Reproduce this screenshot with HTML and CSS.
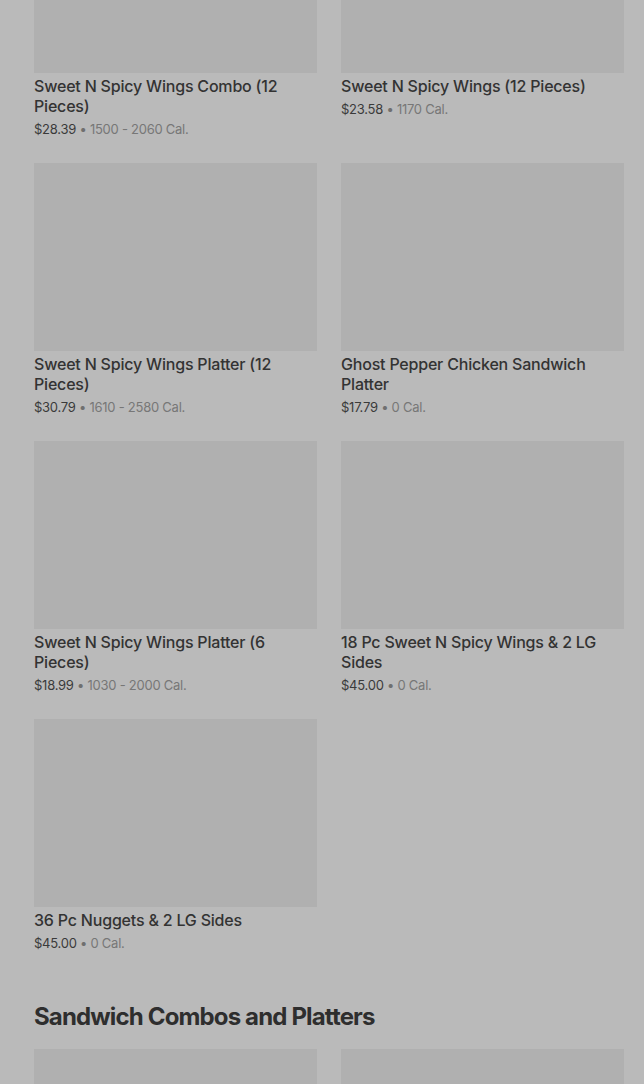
FILE: index.html
```html
<!DOCTYPE html>
<html lang="en">
    <head>
        <meta charset="UTF-8" />
        <meta name="viewport" content="width=device-width, initial-scale=1.0" />
        <title>Menu</title>
        <link rel="stylesheet" href="styles.css">
    </head>
    <body>
        <div class="page">
            <!-- Wings section (scrolled) -->
            <section class="menu-section first">
                <div class="item-grid">
                    <div class="item">
                        <div class="item-img"></div>
                        <div class="item-name">Sweet N Spicy Wings Combo (12 Pieces)</div>
                        <div class="item-meta"><span class="price">$28.39</span> • <span class="cal">1500 - 2060 Cal.</span></div>
                    </div>
                    <div class="item">
                        <div class="item-img"></div>
                        <div class="item-name">Sweet N Spicy Wings (12 Pieces)</div>
                        <div class="item-meta"><span class="price">$23.58</span> • <span class="cal">1170 Cal.</span></div>
                    </div>
                    <div class="item">
                        <div class="item-img"></div>
                        <div class="item-name">Sweet N Spicy Wings Platter (12 Pieces)</div>
                        <div class="item-meta"><span class="price">$30.79</span> • <span class="cal">1610 - 2580 Cal.</span></div>
                    </div>
                    <div class="item">
                        <div class="item-img"></div>
                        <div class="item-name">Ghost Pepper Chicken Sandwich Platter</div>
                        <div class="item-meta"><span class="price">$17.79</span> • <span class="cal">0 Cal.</span></div>
                    </div>
                    <div class="item">
                        <div class="item-img"></div>
                        <div class="item-name">Sweet N Spicy Wings Platter (6 Pieces)</div>
                        <div class="item-meta"><span class="price">$18.99</span> • <span class="cal">1030 - 2000 Cal.</span></div>
                    </div>
                    <div class="item">
                        <div class="item-img"></div>
                        <div class="item-name">18 Pc Sweet N Spicy Wings &amp; 2 LG Sides</div>
                        <div class="item-meta"><span class="price">$45.00</span> • <span class="cal">0 Cal.</span></div>
                    </div>
                    <div class="item">
                        <div class="item-img"></div>
                        <div class="item-name">36 Pc Nuggets &amp; 2 LG Sides</div>
                        <div class="item-meta"><span class="price">$45.00</span> • <span class="cal">0 Cal.</span></div>
                    </div>
                </div>
            </section>

            <!-- Sandwich section -->
            <section class="menu-section">
                <h2 class="section-title">Sandwich Combos and Platters</h2>
                <div class="item-grid">
                    <div class="item">
                        <div class="item-img"></div>
                    </div>
                    <div class="item">
                        <div class="item-img"></div>
                    </div>
                </div>
            </section>
        </div>
    </body>
</html>
```

FILE: styles.css
```css
html, body {
    margin: 0;
    background-color: #bababa;
    overflow: hidden;
}

body {
    font-family: Inter, "Noto Sans", Arial, sans-serif;
    color: #333;
}

.page {
    padding: 0 20px 0 34px;
}

/* scrolled past top of the list */
.menu-section.first {
    margin-top: -115px;
}

.item-grid {
    display: grid;
    grid-template-columns: 283px 283px;
    column-gap: 24px;
    row-gap: 24px;
}

.item-img {
    height: 188px;
    background-color: #b0b0b0;
}

.item-name {
    margin-top: 3px;
    font-size: 16px;
    line-height: 20px;
    font-weight: 500;
    color: #333;
    letter-spacing: -0.2px;
}

.item-meta {
    margin-top: 3px;
    font-size: 13px;
    line-height: 20px;
    color: #6f6f6f;
    letter-spacing: -0.25px;
}

.item-meta .price {
    color: #3a3a3a;
}

.item-meta .cal {
    color: #777;
}

/* section title */
.section-title {
    margin: 48px 0 16px;
    font-size: 24px;
    line-height: 32px;
    font-weight: 700;
    color: #2e2e2e;
    letter-spacing: -0.85px;
}
```
